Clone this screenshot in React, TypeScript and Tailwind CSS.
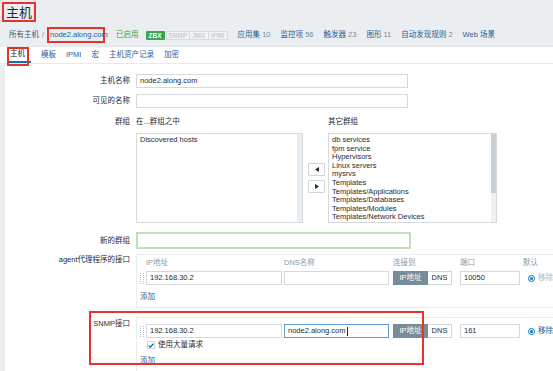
export default function App() {
  return (
    <div className="relative h-[371px] w-[553px] overflow-hidden whitespace-nowrap bg-white font-['Liberation_Sans','Noto_Sans_CJK_SC',sans-serif] text-[7.5px] leading-[10px] text-[#1f2c33]">
      {/* header */}
      <div className="h-[47px] border-b border-[#e2e6e9] bg-[#ebeef0]">
        <div className="pl-[2px] pt-[2px]">
          <div className="flex h-[20px] w-[34px] items-center border-2 border-[#e8322d] pl-[2px] text-[13px] leading-none">主机</div>
        </div>
        <div className="mt-[5px] flex h-[16px] items-center pl-[9px]">
          <span className="text-[#3b5a76]">所有主机</span>
          <span className="mx-[3px] text-[#768d99]">/</span>
          <span className="flex h-[16px] w-[58px] items-center border-2 border-[#e8322d] pl-[1px] text-[#1f5f9a]">node2.along.com</span>
          <span className="ml-[11px] text-[#429e47]">已启用</span>
          <div className="ml-[7px] flex h-[9px] text-[6.5px] font-bold leading-[9px]">
            <span className="w-[19px] rounded-[1px] bg-[#3aa356] text-center text-white">ZBX</span>
            <span className="ml-[1px] w-[24px] border border-[#d5dce0] bg-[#f1f3f4] text-center leading-[7px] text-[#c9d1d6]">SNMP</span>
            <span className="w-[19px] border border-l-0 border-[#d5dce0] bg-[#f1f3f4] text-center leading-[7px] text-[#c9d1d6]">JMX</span>
            <span className="w-[19px] border border-l-0 border-[#d5dce0] bg-[#f1f3f4] text-center leading-[7px] text-[#c9d1d6]">IPMI</span>
          </div>
          <div className="ml-[10px] flex gap-[10px]">
            <span><span className="text-[#1f5f9a]">应用集</span> <span className="text-[#768d99]">10</span></span>
            <span><span className="text-[#1f5f9a]">监控项</span> <span className="text-[#768d99]">56</span></span>
            <span><span className="text-[#1f5f9a]">触发器</span> <span className="text-[#768d99]">23</span></span>
            <span><span className="text-[#1f5f9a]">图形</span> <span className="text-[#768d99]">11</span></span>
            <span><span className="text-[#1f5f9a]">自动发现规则</span> <span className="text-[#768d99]">2</span></span>
            <span className="text-[#1f5f9a]">Web 场景</span>
          </div>
        </div>
      </div>

      {/* tabs */}
      <div className="flex h-[17px] items-stretch gap-[10px] border-b border-[#e6eaec] pl-[7px]">
        <div className="relative flex w-[24px] items-center border-b-2 border-[#0275b8] pl-[3px]">
          主机
          <div className="absolute left-0 top-0 h-[19px] w-[22px] border-2 border-[#e8322d]" />
        </div>
        <span className="flex items-center text-[#1f5f9a]">模板</span>
        <span className="flex items-center text-[#1f5f9a]">IPMI</span>
        <span className="flex items-center text-[#1f5f9a]">宏</span>
        <span className="flex items-center text-[#1f5f9a]">主机资产记录</span>
        <span className="flex items-center text-[#1f5f9a]">加密</span>
      </div>

      {/* form */}
      <div className="flex">
        <div className="w-[5px] self-stretch bg-[#ebeef0]" />
        <div className="flex-1 pt-[10px]">
          {/* host name */}
          <div className="flex">
            <div className="flex h-[14px] w-[125px] items-center justify-end">主机名称</div>
            <div className="pl-[6px]">
              <div className="flex h-[14px] w-[272px] items-center border border-[#d3d9dd] pl-[3px]">node2.along.com</div>
            </div>
          </div>
          {/* visible name */}
          <div className="mt-[6px] flex">
            <div className="flex h-[14px] w-[125px] items-center justify-end">可见的名称</div>
            <div className="pl-[6px]">
              <div className="h-[14px] w-[272px] border border-[#d3d9dd]" />
            </div>
          </div>
          {/* groups */}
          <div className="mt-[9px] flex">
            <div className="w-[125px] text-right">群组</div>
            <div className="flex pl-[6px]">
              <div>
                <div className="h-[10px]">在...群组之中</div>
                <div className="mt-[6px] flex h-[90px] w-[167px] border border-[#d3d9dd]">
                  <div className="flex-1 pl-[3px] pt-[2px] leading-[8.6px]">Discovered hosts</div>
                  <div className="w-[5px] bg-[#eaedef]" />
                </div>
              </div>
              <div className="ml-[5px] mt-[46px] flex flex-col gap-[4px]">
                <div className="flex h-[13px] w-[17px] items-center justify-center rounded-[1px] border border-[#ccd5d9] bg-white">
                  <svg width="4" height="5" viewBox="0 0 4 5"><path d="M4 0 L0 2.5 L4 5 Z" fill="#1f2c33" /></svg>
                </div>
                <div className="flex h-[13px] w-[17px] items-center justify-center rounded-[1px] border border-[#ccd5d9] bg-white">
                  <svg width="4" height="5" viewBox="0 0 4 5"><path d="M0 0 L4 2.5 L0 5 Z" fill="#1f2c33" /></svg>
                </div>
              </div>
              <div className="ml-[3px]">
                <div className="h-[10px]">其它群组</div>
                <div className="mt-[6px] flex h-[90px] w-[169px] border border-[#d3d9dd]">
                  <div className="flex-1 overflow-hidden pl-[3px] pt-[2px] leading-[8.6px]">
                    <div>db services</div>
                    <div>fpm service</div>
                    <div>Hypervisors</div>
                    <div>Linux servers</div>
                    <div>mysrvs</div>
                    <div>Templates</div>
                    <div>Templates/Applications</div>
                    <div>Templates/Databases</div>
                    <div>Templates/Modules</div>
                    <div>Templates/Network Devices</div>
                  </div>
                  <div className="flex w-[5px] flex-col bg-[#eef1f3]">
                    <div className="h-[59px] bg-[#c8d0d5]" />
                  </div>
                </div>
              </div>
            </div>
          </div>
          {/* new group */}
          <div className="mt-[9px] flex">
            <div className="flex h-[17px] w-[125px] items-center justify-end">新的群组</div>
            <div className="pl-[6px]">
              <div className="h-[17px] w-[275px] border-2 border-[#bfe0ba]" />
            </div>
          </div>
          {/* agent interface */}
          <div className="mt-[5px] flex">
            <div className="w-[125px] pt-[1px] text-right">agent代理程序的接口</div>
            <div className="flex-1 pl-[6px]">
              <div className="border border-r-0 border-[#ebeef0] pb-[5px] pl-[3px]">
                <div className="flex h-[16px] items-center pl-[6px] text-[#8a9ba5]">
                  <span className="w-[138px]">IP地址</span>
                  <span className="w-[109px]">DNS名称</span>
                  <span className="w-[67px]">连接到</span>
                  <span className="w-[63px]">端口</span>
                  <span>默认</span>
                </div>
                <InterfaceRow dns="" port="10050" focus={false} removeActive={false} />
                <div className="mt-[7px] text-[#1f5f9a]">添加</div>
              </div>
            </div>
          </div>
          {/* snmp interface */}
          <div className="mt-[9px] flex">
            <div className="w-[125px] pt-[2px] text-right">SNMP接口</div>
            <div className="flex-1 pl-[6px]">
              <div className="border border-r-0 border-b-0 border-[#ebeef0] pb-[5px] pl-[3px] pt-[6px]">
                <InterfaceRow dns="node2.along.com" port="161" focus={true} removeActive={true} />
                <div className="mt-[3px] flex h-[8px] items-center pl-[7px]">
                  <div className="flex h-[8px] w-[8px] items-center justify-center border border-[#ccd5d9] bg-white">
                    <svg width="6" height="5" viewBox="0 0 6 5"><path d="M0.6 2.6 L2.3 4.2 L5.4 0.8" stroke="#0275b8" strokeWidth="1.3" fill="none" /></svg>
                  </div>
                  <span className="ml-[3px]">使用大量请求</span>
                </div>
                <div className="mt-[7px] text-[#1f5f9a]">添加</div>
              </div>
            </div>
          </div>
        </div>
      </div>

      {/* annotation around SNMP block */}
      <div className="absolute left-[89px] top-[311px] h-[54px] w-[335px] border-2 border-[#e8322d]" />
    </div>
  )
}

function InterfaceRow({ dns, port, focus, removeActive }: { dns: string; port: string; focus: boolean; removeActive: boolean }) {
  return (
    <div className="flex h-[14px] items-center">
      <div className="h-[11px] w-[4px] border-x border-dotted border-[#b5c2c9]" />
      <div className="ml-[2px] flex h-[14px] w-[136px] items-center border border-[#d3d9dd] pl-[3px]">192.168.30.2</div>
      <div className={`ml-[2px] flex h-[14px] w-[105px] items-center border pl-[3px] ${focus ? "border-[#5b9bd1]" : "border-[#d3d9dd]"}`}>
        {dns}
        {focus && <span className="ml-[1px] h-[9px] w-px bg-[#1f2c33]" />}
      </div>
      <div className="ml-[4px] flex h-[14px]">
        <div className="flex w-[35px] items-center justify-center bg-[#768d99] text-white">IP地址</div>
        <div className="flex w-[24px] items-center justify-center border border-l-0 border-[#ccd5d9] bg-white">DNS</div>
      </div>
      <div className="ml-[8px] flex h-[14px] w-[60px] items-center border border-[#d3d9dd] pl-[3px]">{port}</div>
      <div className="ml-[8px] flex h-[7px] w-[7px] items-center justify-center rounded-full border border-[#0275b8] bg-white">
        <div className="h-[3px] w-[3px] rounded-full bg-[#0275b8]" />
      </div>
      <span className={`ml-[3px] ${removeActive ? "text-[#1f5f9a]" : "text-[#acbbc2]"}`}>移除</span>
    </div>
  )
}
